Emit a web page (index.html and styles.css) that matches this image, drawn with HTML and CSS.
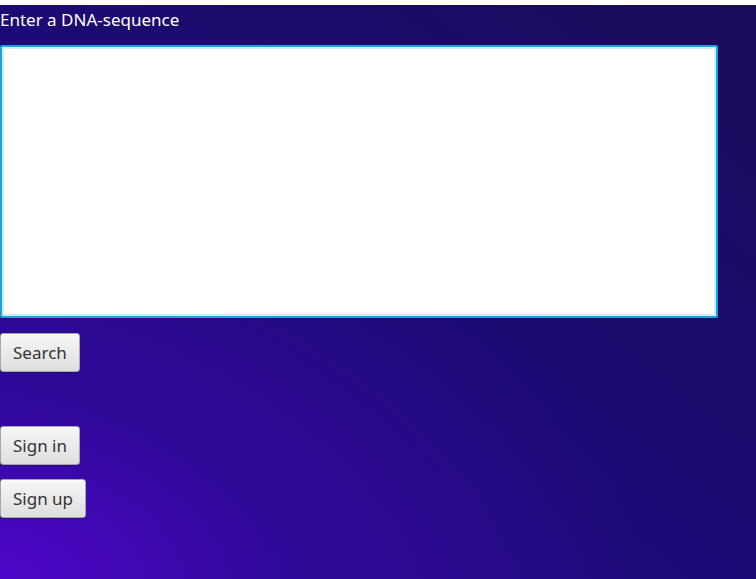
FILE: index.html
```html
<!DOCTYPE html>
<html>
<head>
<meta charset="utf-8">
<link rel="stylesheet" href="styles.css">
</head>
<body>
<div class="topbar"></div>
<main class="app">
  <label class="prompt" for="seq">Enter a DNA-sequence</label>
  <textarea id="seq" class="seq"></textarea>
  <button class="btn btn-search">Search</button>
  <div class="auth">
    <button class="btn">Sign in</button>
    <button class="btn">Sign up</button>
  </div>
</main>
</body>
</html>
```

FILE: styles.css
```css
html, body {
  margin: 0;
  padding: 0;
  height: 100%;
}
body {
  background:
    radial-gradient(ellipse 85% 70% at 0% 100%, rgba(80, 6, 205, 0.95) 0%, rgba(60, 8, 170, 0.55) 40%, rgba(40, 10, 130, 0) 100%),
    linear-gradient(to top right, #2a0a98 0%, #1e0a78 45%, #1b0a68 70%, #1a0c5a 100%);
  font-family: "Noto Sans", "Open Sans", sans-serif;
  overflow: hidden;
}
.topbar {
  height: 5px;
  background: #ffffff;
}
.app {
  display: flex;
  flex-direction: column;
  align-items: flex-start;
}
.prompt {
  color: #ffffff;
  font-size: 17px;
  line-height: 22px;
  margin-top: 4px;
  padding-left: 0;
}
.seq {
  box-sizing: border-box;
  width: 718px;
  height: 273px;
  margin-top: 14px;
  border: 2px solid #1aa3dc;
  box-shadow: inset 0 0 0 2px #cfeefa;
  border-radius: 2px;
  background: #ffffff;
  resize: none;
  outline: none;
}
.btn {
  box-sizing: border-box;
  height: 39px;
  padding: 0 12px;
  font-family: "Noto Sans", "Open Sans", sans-serif;
  font-size: 17px;
  color: #333333;
  background: linear-gradient(#f7f7f7, #dedede);
  border: 1px solid #a7a7a7;
  border-radius: 3px;
  box-shadow: inset 0 1px 0 #ffffff, 0 1px 0 rgba(0,0,0,0.25);
}
.btn-search {
  margin-top: 15px;
}
.auth {
  display: flex;
  flex-direction: column;
  align-items: flex-start;
  gap: 14px;
  margin-top: 54px;
}
```
